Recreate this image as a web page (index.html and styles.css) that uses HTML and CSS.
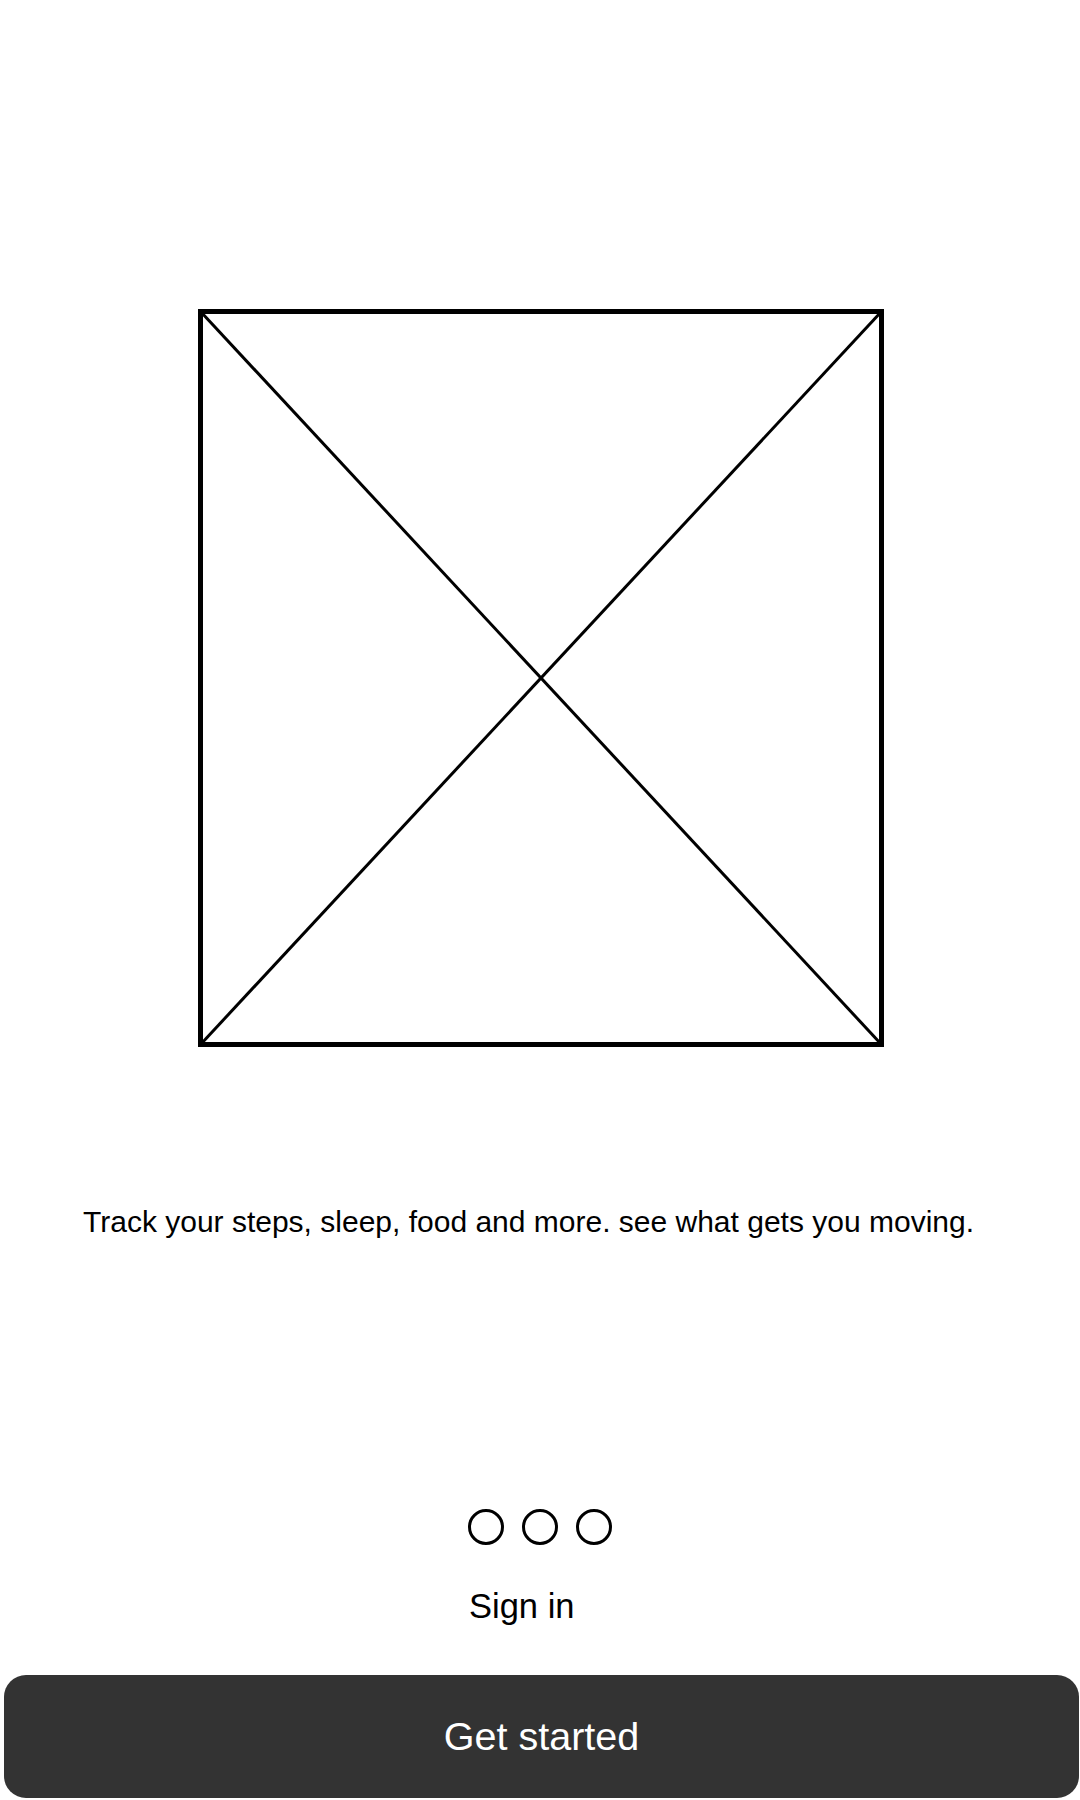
FILE: index.html
```html
<!DOCTYPE html>
<html>
<head>
<meta charset="utf-8">
<link rel="stylesheet" href="styles.css">
</head>
<body>
<div class="screen">
  <div class="hero">
    <svg class="placeholder" width="686" height="738" viewBox="0 0 686 738">
      <rect x="2.5" y="2.5" width="681" height="733" fill="none" stroke="#000" stroke-width="5"/>
      <line x1="3" y1="3" x2="683" y2="735" stroke="#000" stroke-width="3"/>
      <line x1="683" y1="3" x2="3" y2="735" stroke="#000" stroke-width="3"/>
    </svg>
  </div>
  <p class="tagline">Track your steps, sleep, food and more. see what gets you moving.</p>
  <div class="dots">
    <span class="dot"></span>
    <span class="dot"></span>
    <span class="dot"></span>
  </div>
  <div class="signin">Sign in</div>
  <button class="cta">Get started</button>
</div>
</body>
</html>
```
FILE: styles.css
```css
html, body {
  margin: 0;
  padding: 0;
  background: #fff;
}
.screen {
  width: 1080px;
  height: 1800px;
  display: flex;
  flex-direction: column;
  font-family: "Liberation Sans", Arial, sans-serif;
  color: #000;
}
.hero {
  padding-top: 309px;
  padding-left: 198px;
  display: flex;
}
.placeholder {
  display: block;
}
.tagline {
  margin: 158px 0 0 0;
  padding-left: 83px;
  font-size: 30px;
  line-height: 34px;
}
.dots {
  margin-top: 270px;
  display: flex;
  justify-content: center;
  gap: 18px;
}
.dot {
  width: 36px;
  height: 36px;
  box-sizing: border-box;
  border: 3px solid #000;
  border-radius: 50%;
}
.signin {
  margin-top: 41px;
  padding-left: 469px;
  font-size: 34.5px;
  line-height: 40px;
}
.cta {
  margin: 49px 1px 2px 4px;
  height: 123px;
  flex-shrink: 0;
  border: none;
  border-radius: 22px;
  background: #333333;
  color: #fff;
  font-family: "Liberation Sans", Arial, sans-serif;
  font-size: 39.5px;
}
```
